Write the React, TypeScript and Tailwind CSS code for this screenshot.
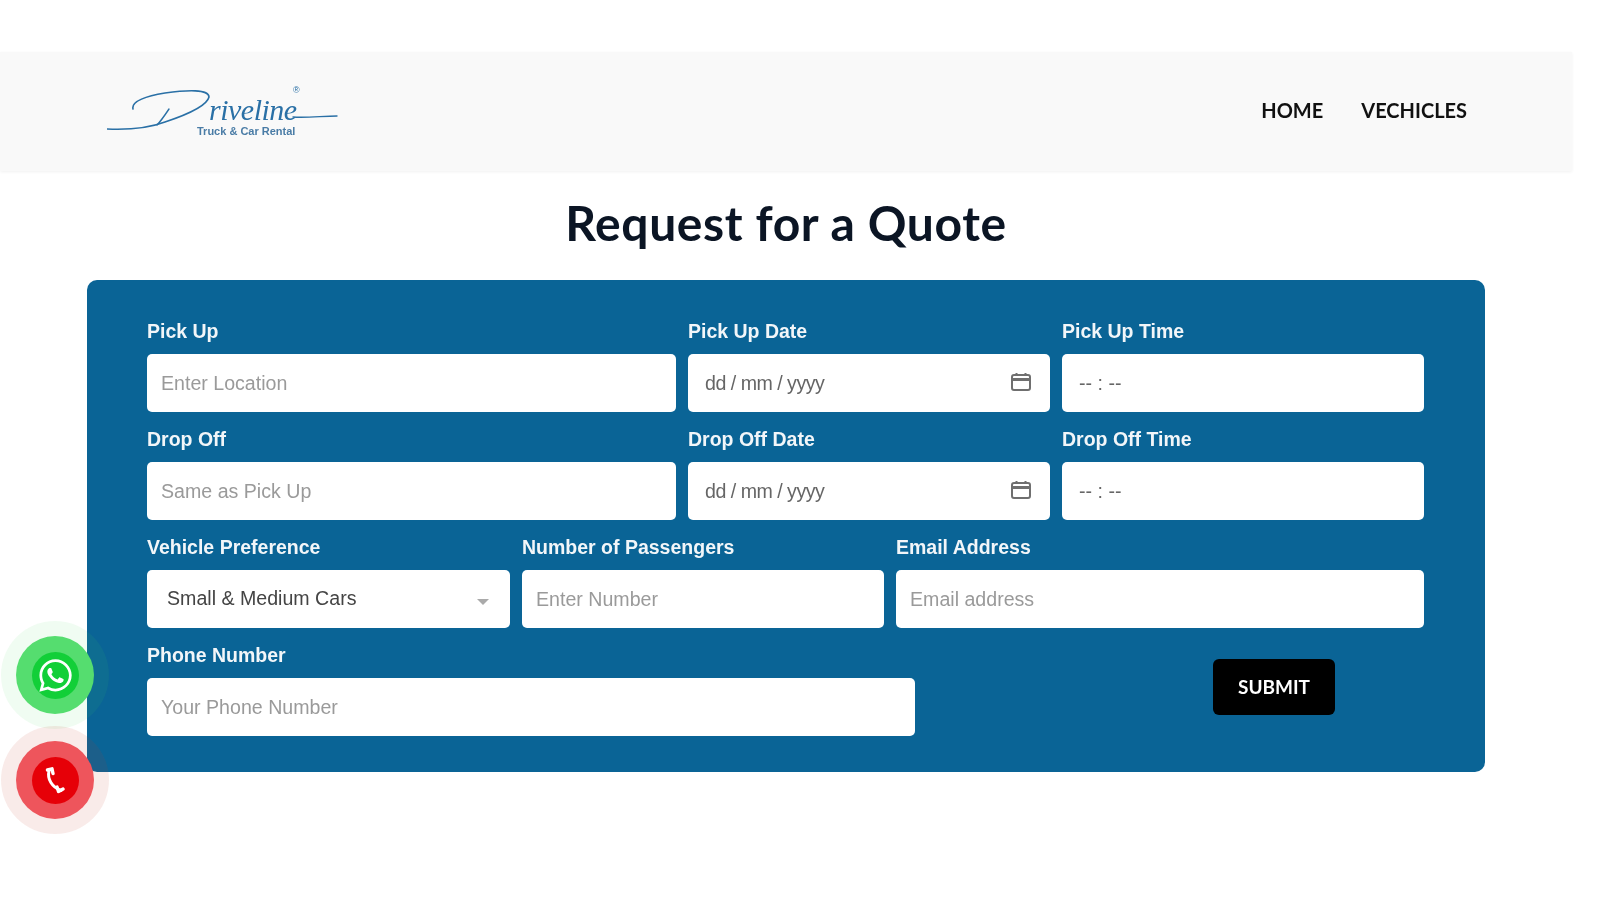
import { FaWhatsapp } from "react-icons/fa";

const fieldClass =
  "w-full h-[58px] rounded-[5px] bg-white px-[14px] text-[19.6px] text-[#444] placeholder:text-[#9a9a9a] outline-none";

function Label({ children }: { children: string }) {
  return <label className="block h-[34px] mt-[-1px] mb-[1px] text-[19.5px] leading-[24px] font-bold text-[#f2f6f9]">{children}</label>;
}

function TextField({ label, placeholder }: { label: string; placeholder: string }) {
  return (
    <div>
      <Label>{label}</Label>
      <input className={fieldClass} placeholder={placeholder} readOnly />
    </div>
  );
}

function DateField({ label }: { label: string }) {
  return (
    <div>
      <Label>{label}</Label>
      <div className="relative">
        <input className={`${fieldClass} pl-[17px] tracking-[-0.5px] placeholder:text-[#666]`} placeholder="dd / mm / yyyy" readOnly />
        <svg className="absolute right-[18px] top-[18px]" width="22" height="20" viewBox="0 0 22 20" fill="none" stroke="#6f6f6f" strokeWidth="2">
          <rect x="2" y="3" width="18" height="15" rx="2" />
          <path d="M2 7.5h18" strokeWidth="3" />
          <path d="M6.5 1v3M15.5 1v3" />
        </svg>
      </div>
    </div>
  );
}

function TimeField({ label }: { label: string }) {
  return (
    <div>
      <Label>{label}</Label>
      <input className={`${fieldClass} pl-[17px] placeholder:text-[#666]`} placeholder="-- : --" readOnly />
    </div>
  );
}

function Logo() {
  return (
    <div className="relative w-[240px] h-[60px]">
      <svg className="absolute left-0 top-0" width="240" height="60" viewBox="0 0 240 60" fill="none" stroke="#2a70a6" strokeLinecap="round">
        <path d="M0 49 C22 50 42 48 58 42 C82 34 100 26 102 17 C102 9 80 10 58 13 C40 16 24 21 26 29" strokeWidth="1.6" />
        <path d="M62 29 C58 35 54 41 50 45" strokeWidth="1.4" />
        <path d="M186 37 C200 38 216 36 230 36" strokeWidth="1.4" />
      </svg>
      <span className="absolute left-[102px] top-[17px] font-['Liberation_Serif',serif] italic text-[30px] leading-[26px] tracking-[-0.5px] text-[#2a70a6]">riveline</span>
      <span className="absolute left-[186px] top-[5px] text-[9px] leading-[10px] text-[#2a70a6]">®</span>
      <span className="absolute left-[90px] top-[45px] whitespace-nowrap text-[11px] leading-[13px] font-bold text-[#4a7ca6]">Truck &amp; Car Rental</span>
    </div>
  );
}

function CallIcon() {
  return (
    <svg width="20" height="27" viewBox="0 0 20 27" fill="none" stroke="#fff" strokeLinecap="round">
      <path d="M4 4 C2 12 7 20 16 23.5" strokeWidth="3" />
      <path d="M2.5 3 L7 1.8 L8 6.5" strokeWidth="3.4" strokeLinejoin="round" />
      <path d="M12 20 L13.5 24.5 L18 22" strokeWidth="3.4" strokeLinejoin="round" />
    </svg>
  );
}

export default function App() {
  return (
    <div className="relative w-full h-[900px] overflow-hidden bg-white font-['Liberation_Sans',Arial,sans-serif] blur-[0.5px]">
      <div className="w-[1572px] pt-[52px]">
        <header className="h-[119px] bg-[#f9f9f9] shadow-[0_1px_3px_rgba(0,0,0,0.06)] flex items-center justify-between pl-[107px] pr-[105px]">
          <div className="mt-[-4px]">
            <Logo />
          </div>
          <nav className="flex items-center gap-[38px] mt-[-4px] font-['Lato',sans-serif] text-[20px] font-bold text-[#111]">
            <a>HOME</a>
            <a>VECHICLES</a>
          </nav>
        </header>

        <h1 className="mt-[23px] h-[86px] text-center font-['Lato',sans-serif] text-[48px] leading-[58px] tracking-[0.6px] font-bold text-[#0b1524]">Request for a Quote</h1>

        <form className="mx-[87px] h-[492px] rounded-[10px] bg-[#0a6496] px-[60px] pt-[40px]">
          <div className="grid grid-cols-[529px_362px_362px] gap-x-3 mb-[16px]">
            <TextField label="Pick Up" placeholder="Enter Location" />
            <DateField label="Pick Up Date" />
            <TimeField label="Pick Up Time" />
          </div>
          <div className="grid grid-cols-[529px_362px_362px] gap-x-3 mb-[16px]">
            <TextField label="Drop Off" placeholder="Same as Pick Up" />
            <DateField label="Drop Off Date" />
            <TimeField label="Drop Off Time" />
          </div>
          <div className="grid grid-cols-[363px_362px_528px] gap-x-3 mb-[16px]">
            <div>
              <Label>Vehicle Preference</Label>
              <div className={`${fieldClass} relative flex items-center pl-[20px]`}>
                Small &amp; Medium Cars
                <span className="absolute right-[21px] top-[29px] border-x-[6px] border-t-[6px] border-x-transparent border-t-[#aaa]" />
              </div>
            </div>
            <TextField label="Number of Passengers" placeholder="Enter Number" />
            <TextField label="Email Address" placeholder="Email address" />
          </div>
          <div className="flex">
            <div className="w-[768px]">
              <TextField label="Phone Number" placeholder="Your Phone Number" />
            </div>
            <button type="button" className="ml-[298px] mt-[15px] w-[122px] h-[56px] rounded-[6px] bg-black text-[19px] font-bold font-['Lato',sans-serif] text-white">
              SUBMIT
            </button>
          </div>
        </form>
      </div>

      <div className="absolute left-[1px] top-[621px] w-[108px] h-[108px] rounded-full bg-[#3fd45a]/8 flex items-center justify-center">
        <div className="w-[78px] h-[78px] rounded-full bg-[#55dd6f] flex items-center justify-center">
          <div className="w-[47px] h-[47px] rounded-full bg-[#12cf38] flex items-center justify-center text-white">
            <FaWhatsapp size={37} />
          </div>
        </div>
      </div>
      <div className="absolute left-[1px] top-[726px] w-[108px] h-[108px] rounded-full bg-[#c0392b]/10 flex items-center justify-center">
        <div className="w-[78px] h-[78px] rounded-full bg-[#ee555c] flex items-center justify-center">
          <div className="w-[47px] h-[47px] rounded-full bg-[#e60008] flex items-center justify-center">
            <CallIcon />
          </div>
        </div>
      </div>
    </div>
  );
}
